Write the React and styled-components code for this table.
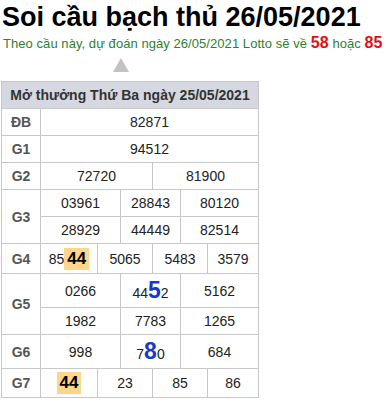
import styled, { createGlobalStyle } from "styled-components";

const GlobalStyle = createGlobalStyle`
  body {
    margin: 0;
    background: #fff;
    font-family: "Liberation Sans", Arial, sans-serif;
  }
`;

// [label, labelRowSpan, [[colSpan, value], ...]]
const rows = [
  ["ĐB", 1, [[6, "82871"]]],
  ["G1", 1, [[6, "94512"]]],
  ["G2", 1, [[3, "72720"], [3, "81900"]]],
  ["G3", 2, [[2, "03961"], [2, "28843"], [2, "80120"]]],
  [null, 0, [[2, "28929"], [2, "44449"], [2, "82514"]]],
  ["G4", 1, [[1, ["85", { hl: "44" }]], [2, "5065"], [2, "5483"], [1, "3579"]]],
  ["G5", 2, [[2, "0266"], [2, ["44", { blue: "5" }, "2"]], [2, "5162"]]],
  [null, 0, [[2, "1982"], [2, "7783"], [2, "1265"]]],
  ["G6", 1, [[2, "998"], [2, ["7", { blue: "8" }, "0"]], [2, "684"]]],
  ["G7", 1, [[1, [{ hl: "44" }]], [2, "23"], [2, "85"], [1, "86"]]],
];

function renderValue(v) {
  if (typeof v === "string") return v;
  return v.map((part, i) => {
    if (typeof part === "string") return <span key={i}>{part}</span>;
    if (part.hl) return <Hot key={i}>{part.hl}</Hot>;
    return <Blue key={i}>{part.blue}</Blue>;
  });
}

function App() {
  return (
    <Page>
      <GlobalStyle />
      <Title>Soi cầu bạch thủ 26/05/2021</Title>
      <Lead>
        Theo cầu này, dự đoán ngày 26/05/2021 Lotto sẽ về <Red>58</Red> hoặc <Red>85</Red>
      </Lead>
      <Pointer />
      <Results>
        <Head>Mở thưởng Thứ Ba ngày 25/05/2021</Head>
        {rows.map(([label, labelRows, cells], i) => [
          label && (
            <Label key={"l" + i} $rows={labelRows}>
              {label}
            </Label>
          ),
          ...cells.map(([span, v], j) => (
            <Cell key={i + "-" + j} $span={span}>
              {renderValue(v)}
            </Cell>
          )),
        ])}
      </Results>
    </Page>
  );
}

export default App;

const Page = styled.div`
  padding: 0 1px;
  width: 387px;
`;

const Title = styled.h1`
  margin: 0;
  padding: 1px 0 0 1px;
  font-size: 27px;
  line-height: 32px;
  font-weight: bold;
  color: #000;
`;

const Lead = styled.div`
  margin-top: 1px;
  padding-left: 2px;
  font-size: 13px;
  line-height: 18px;
  letter-spacing: 0.06px;
  color: #2f7f2f;
  white-space: nowrap;
`;

const Red = styled.b`
  color: #e01010;
  font-size: 16px;
`;

const Pointer = styled.div`
  width: 0;
  height: 0;
  margin: 5px 0 9px 112px;
  border-left: 8px solid transparent;
  border-right: 8px solid transparent;
  border-bottom: 14px solid #c2c2c2;
`;

const Results = styled.div`
  display: grid;
  width: fit-content;
  grid-template-columns: 38px 56px 22px 31px 27px 26px 50px;
  grid-template-rows: 26px 26px 26px 26px 26px 26px 29px 33px 26px 33px 28px;
  gap: 1px;
  border: 1px solid #c8c8c8;
  background: #c8c8c8;
  font-size: 14px;
  color: #222;
`;

const Head = styled.div`
  grid-column: 1 / -1;
  display: flex;
  align-items: center;
  justify-content: center;
  background: #d5d8e1;
  color: #333;
  font-weight: bold;
  white-space: nowrap;
`;

const Label = styled.div`
  grid-row: span ${(p) => p.$rows};
  display: flex;
  align-items: center;
  justify-content: center;
  background: #fff;
  color: #555;
  font-weight: bold;
`;

const Cell = styled.div`
  grid-column: span ${(p) => p.$span};
  display: flex;
  align-items: baseline;
  justify-content: center;
  align-content: center;
  flex-wrap: wrap;
  background: #fff;
  white-space: nowrap;
`;

const Hot = styled.span`
  display: inline-block;
  background: #fcd68c;
  color: #000;
  font-weight: bold;
  font-size: 17px;
  line-height: 20px;
  padding: 1px 3px;
`;

const Blue = styled.span`
  color: #1739d0;
  font-weight: bold;
  font-size: 23px;
`;
